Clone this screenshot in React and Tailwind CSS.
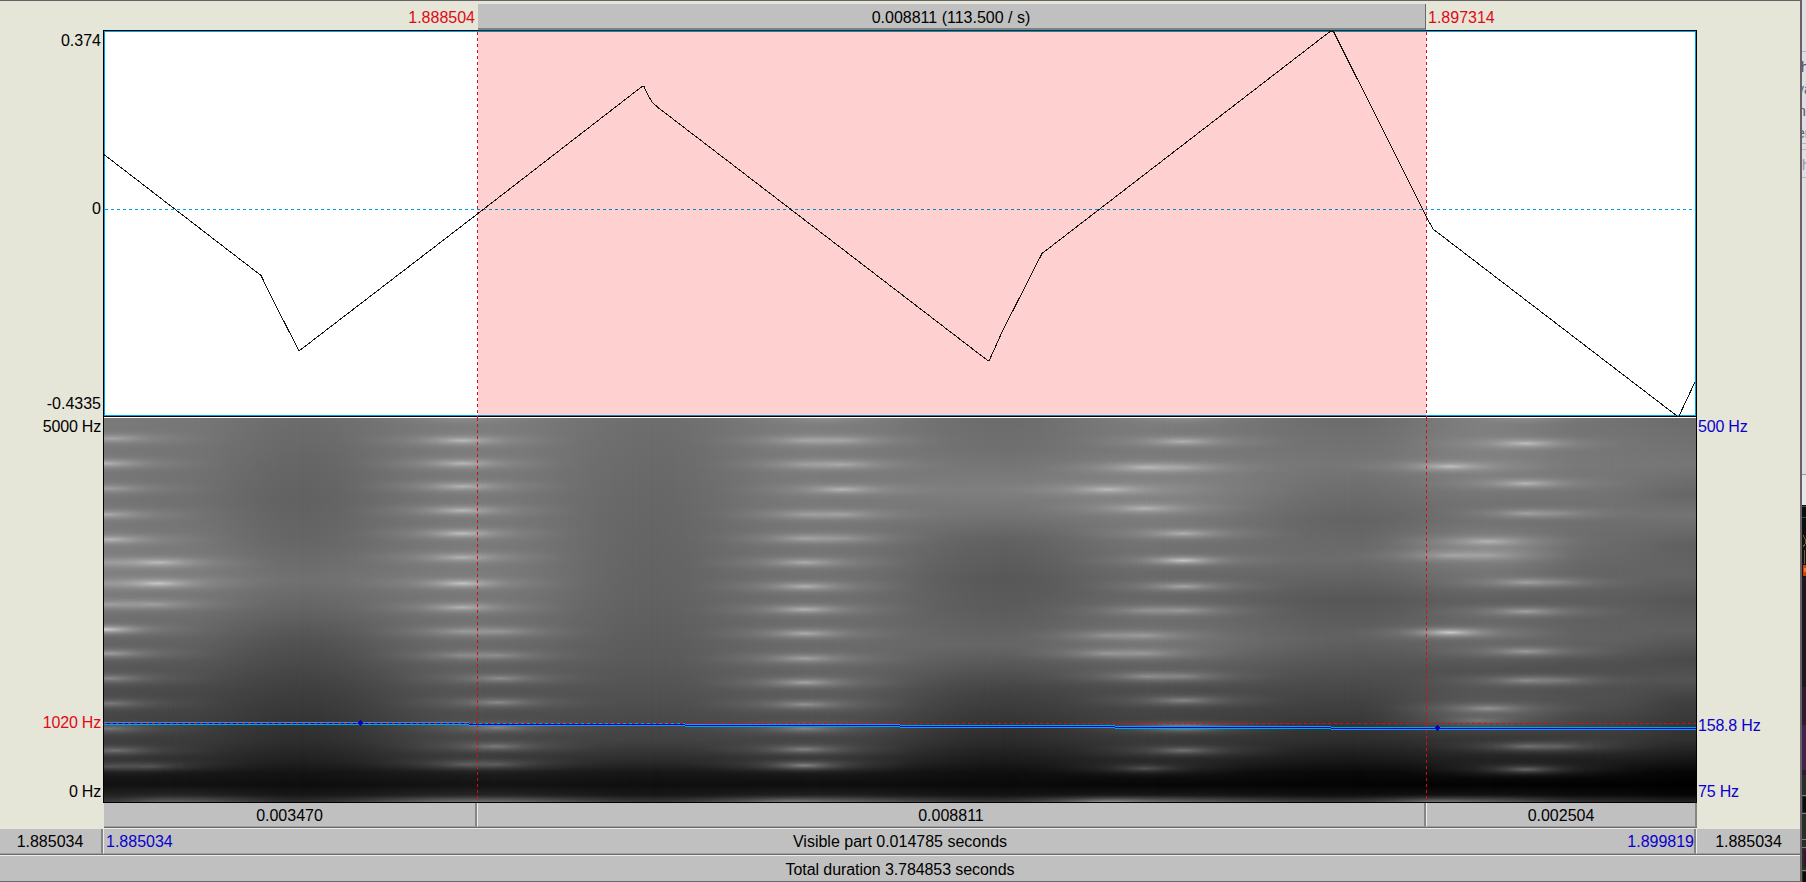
import React from "react";

const X0 = 104;
const Y0 = 418;
const W = 1592;
const H = 384;

/* Background energy of the spectrogram: grey levels per time column, keyed by y. */
const COLUMNS = [
  { x: 104, s: [[418, 0x7a], [500, 0x76], [580, 0x82], [640, 0x66], [690, 0x4e], [740, 0x40], [762, 0x30], [772, 0x1a], [785, 0x12], [795, 0x22], [802, 0x3c]] },
  { x: 170, s: [[418, 0x78], [500, 0x71], [580, 0x80], [640, 0x64], [690, 0x4a], [740, 0x3c], [762, 0x2c], [772, 0x18], [785, 0x11], [795, 0x26], [802, 0x60]] },
  { x: 300, s: [[418, 0x6d], [470, 0x65], [500, 0x62], [540, 0x66], [580, 0x71], [610, 0x64], [640, 0x53], [690, 0x3f], [740, 0x2e], [762, 0x20], [772, 0x15], [785, 0x0e], [795, 0x18], [802, 0x30]] },
  { x: 475, s: [[418, 0x7e], [500, 0x79], [580, 0x7c], [640, 0x6e], [690, 0x56], [740, 0x48], [762, 0x36], [772, 0x1e], [785, 0x13], [795, 0x26], [802, 0x70]] },
  { x: 650, s: [[418, 0x6e], [500, 0x67], [600, 0x62], [660, 0x5a], [700, 0x50], [740, 0x42], [762, 0x2a], [772, 0x18], [785, 0x0f], [795, 0x18], [802, 0x38]] },
  { x: 820, s: [[418, 0x7e], [500, 0x7a], [600, 0x70], [660, 0x6a], [700, 0x5a], [740, 0x46], [762, 0x30], [772, 0x1a], [785, 0x0e], [795, 0x20], [802, 0x60]] },
  { x: 1000, s: [[418, 0x6c], [450, 0x70], [490, 0x7f], [515, 0x74], [540, 0x62], [580, 0x58], [610, 0x5c], [645, 0x66], [670, 0x54], [690, 0x44], [740, 0x2c], [762, 0x1a], [772, 0x10], [785, 0x0a], [795, 0x14], [802, 0x38]] },
  { x: 1155, s: [[418, 0x7c], [450, 0x7a], [490, 0x86], [540, 0x74], [590, 0x66], [645, 0x74], [690, 0x4e], [740, 0x3a], [762, 0x26], [772, 0x12], [785, 0x07], [795, 0x18], [802, 0x60]] },
  { x: 1350, s: [[418, 0x6c], [465, 0x76], [520, 0x64], [560, 0x6c], [600, 0x57], [640, 0x61], [690, 0x48], [740, 0x2e], [762, 0x16], [772, 0x0a], [785, 0x04], [795, 0x10], [802, 0x38]] },
  { x: 1490, s: [[418, 0x7e], [465, 0x82], [515, 0x6e], [550, 0x86], [600, 0x60], [635, 0x6e], [670, 0x52], [715, 0x5a], [740, 0x34], [762, 0x20], [772, 0x0e], [785, 0x03], [795, 0x12], [802, 0x54]] },
  { x: 1600, s: [[418, 0x72], [465, 0x78], [515, 0x70], [550, 0x6a], [600, 0x5e], [640, 0x62], [665, 0x50], [700, 0x50], [740, 0x3a], [762, 0x1c], [772, 0x0c], [785, 0x02], [795, 0x0c], [802, 0x30]] },
  { x: 1696, s: [[418, 0x6c], [465, 0x76], [495, 0x66], [515, 0x74], [545, 0x60], [575, 0x64], [600, 0x56], [630, 0x60], [660, 0x4a], [680, 0x54], [700, 0x40], [740, 0x30], [762, 0x14], [772, 0x06], [785, 0x00], [795, 0x06], [802, 0x24]] },
];

/* Harmonics: [x, y, peak grey level]. */
const HARMONICS = [
  [112, 438, 0xa6], [106, 463, 0xb4], [110, 488, 0x9c], [106, 514, 0xaa], [110, 539, 0xb8],
  [158, 562, 0xbe], [104, 562, 0x94], [158, 583, 0xce], [104, 583, 0x90], [154, 604, 0x98], [108, 604, 0x98],
  [106, 629, 0xdc], [110, 653, 0x9c], [110, 678, 0x86], [110, 703, 0x78], [110, 728, 0x74],
  [115, 750, 0x70], [150, 766, 0x4a], [110, 766, 0x4a],
  [462, 440, 0xbc], [462, 463, 0xb8], [462, 486, 0xb5], [462, 510, 0xbc], [462, 533, 0xc4],
  [462, 557, 0xb2], [462, 583, 0xcb], [462, 607, 0xb4], [462, 631, 0x90], [500, 631, 0x8c],
  [462, 655, 0x80], [498, 655, 0x84], [500, 678, 0x8c], [498, 702, 0x88], [498, 727, 0x80],
  [496, 746, 0x78], [464, 764, 0x52], [497, 764, 0x50],
  [805, 440, 0x9c], [842, 440, 0x9c], [805, 464, 0x92], [842, 464, 0xa4], [842, 489, 0xb8],
  [805, 514, 0x94], [842, 514, 0x9a], [805, 538, 0x9c], [842, 538, 0x8c], [805, 562, 0xac],
  [805, 586, 0xb2], [805, 609, 0xb6], [805, 633, 0xae], [805, 658, 0xa0], [805, 682, 0xa6],
  [805, 704, 0x90], [805, 728, 0x80], [804, 749, 0x80], [804, 765, 0x86],
  [1183, 441, 0xb2], [1146, 467, 0xb4], [1183, 467, 0x98], [1108, 489, 0xbc], [1145, 508, 0xb6],
  [1183, 533, 0xb0], [1183, 560, 0xd4], [1183, 586, 0xa6], [1145, 610, 0x86], [1183, 610, 0x90],
  [1145, 635, 0x94], [1107, 635, 0x86], [1107, 653, 0x8e], [1145, 653, 0x8e],
  [1146, 676, 0x84], [1183, 676, 0x7a], [1183, 700, 0x86], [1183, 727, 0x96],
  [1183, 750, 0x70], [1145, 768, 0x50],
  [1526, 443, 0xc2], [1450, 466, 0xc2], [1526, 483, 0xb8], [1526, 513, 0x9c], [1560, 513, 0x80],
  [1488, 541, 0xb4], [1450, 555, 0x9c], [1488, 555, 0x9a], [1526, 582, 0x9a], [1560, 582, 0x78],
  [1526, 611, 0xa0], [1450, 632, 0xda], [1526, 651, 0x9a], [1526, 680, 0x84], [1562, 680, 0x6c],
  [1488, 708, 0x92], [1478, 720, 0x74], [1526, 746, 0x66], [1560, 746, 0x50], [1526, 769, 0x64],
  [462, 417, 0x90], [824, 417, 0x92], [1183, 417, 0x90], [1526, 417, 0x90],
  [1107, 803, 0xa4], [1440, 803, 0x80], [790, 803, 0x78],
];

const levelIn = (stops, y) => {
  if (y <= stops[0][0]) return stops[0][1];
  for (let i = 1; i < stops.length; i++) {
    if (y <= stops[i][0]) {
      const [ya, a] = stops[i - 1];
      const [yb, b] = stops[i];
      return a + ((b - a) * (y - ya)) / (yb - ya);
    }
  }
  return stops[stops.length - 1][1];
};

const levelAt = (x, y) => {
  for (let i = 1; i < COLUMNS.length; i++) {
    if (x <= COLUMNS[i].x) {
      const a = COLUMNS[i - 1];
      const b = COLUMNS[i];
      const t = (x - a.x) / (b.x - a.x);
      return levelIn(a.s, y) * (1 - t) + levelIn(b.s, y) * t;
    }
  }
  return 0;
};

const FALLOFF = [[0, 1], [0.08, 0.86], [0.18, 0.66], [0.3, 0.45], [0.45, 0.26], [0.62, 0.12], [0.8, 0.04], [1, 0]];
const SOFT = [[0, 1], [0.2, 0.85], [0.4, 0.56], [0.6, 0.28], [0.8, 0.08], [1, 0]];

const PITCH = [[103, 469, 723], [469, 685, 724], [685, 900, 725], [900, 1115, 726], [1115, 1331, 727], [1331, 1698, 728]];

function Spectrogram() {
  return (
    <svg className="block shrink-0" width={W} height={H} viewBox={`${X0} ${Y0} ${W} ${H}`}>
      <defs>
        {COLUMNS.map((c, i) => (
          <linearGradient key={i} id={`col${i}`} gradientUnits="userSpaceOnUse" x1="0" y1={Y0} x2="0" y2={Y0 + H}>
            {c.s.map(([y, g]) => (
              <stop key={y} offset={(y - Y0) / H} stopColor={`rgb(${g},${g},${g})`} />
            ))}
          </linearGradient>
        ))}
        <linearGradient id="ramp" x1="0" x2="1" y1="0" y2="0">
          {[0, 0.1, 0.2, 0.3, 0.4, 0.5, 0.6, 0.7, 0.8, 0.9, 1].map((t) => (
            <stop key={t} offset={t} stopColor="#fff" stopOpacity={t * t * (3 - 2 * t)} />
          ))}
        </linearGradient>
        <radialGradient id="core">
          {FALLOFF.map(([o, a]) => <stop key={o} offset={o} stopColor="#fff" stopOpacity={a} />)}
        </radialGradient>
        <radialGradient id="halo">
          {SOFT.map(([o, a]) => <stop key={o} offset={o} stopColor="#fff" stopOpacity={a} />)}
        </radialGradient>
        {COLUMNS.slice(1).map((c, i) => (
          <mask key={i} id={`mix${i}`} maskUnits="userSpaceOnUse" x={COLUMNS[i].x} y={Y0} width={c.x - COLUMNS[i].x} height={H}>
            <rect x={COLUMNS[i].x} y={Y0} width={c.x - COLUMNS[i].x} height={H} fill="url(#ramp)" />
          </mask>
        ))}
      </defs>
      {COLUMNS.slice(1).map((c, i) => {
        const x = COLUMNS[i].x;
        const w = c.x - x;
        return (
          <g key={i}>
            <rect x={x} y={Y0} width={w} height={H} fill={`url(#col${i})`} />
            <rect x={x} y={Y0} width={w} height={H} fill={`url(#col${i + 1})`} mask={`url(#mix${i})`} />
          </g>
        );
      })}
      {HARMONICS.map(([x, y, g], i) => {
        const base = levelAt(x, Math.min(y, 800));
        const a = Math.max(0, (g - base) / (255 - base));
        return (
          <g key={i}>
            <ellipse cx={x} cy={y + 0.5} rx="130" ry="11" fill="url(#halo)" opacity={Math.min(a * 0.34, 0.13)} />
            <ellipse cx={x} cy={y + 0.5} rx="60" ry="7.5" fill="url(#core)" opacity={a * 0.78} />
          </g>
        );
      })}
      <g shapeRendering="crispEdges">
        {PITCH.map(([a, b, y]) => (
          <g key={a}>
            <rect x={a} y={y - 1} width={b - a} height="3" fill="#00a2e8" />
            <rect x={a} y={y} width={b - a} height="1" fill="#0000c8" />
          </g>
        ))}
        <path d="M104 723.5H1696" stroke="#d80c18" strokeDasharray="3 3" />
        <path d="M360 720h1v1h1v1h1v2h-1v1h-1v1h-1v-1h-1v-1h-1v-2h1v-1h1zM1437 725h1v1h1v1h1v2h-1v1h-1v1h-1v-1h-1v-1h-1v-2h1v-1h1z" fill="#0000c8" />
        <path d="M477.5 418V802M1426.5 418V802" stroke="#d80c18" strokeDasharray="3 3" />
      </g>
    </svg>
  );
}

function Waveform() {
  return (
    <svg className="block shrink-0" width="1594" height="388" viewBox="103 30 1594 388" shapeRendering="crispEdges">
      <rect x="103" y="30" width="1594" height="388" fill="#fff" />
      <rect x="478" y="32" width="948" height="383" fill="#ffd0d0" />
      <path d="M104.5 417V31.5H1695.5V415.5H104" fill="none" stroke="#00a2e8" />
      <path d="M103.5 418V30.5H1696.5V418M103 416.5H1697" fill="none" stroke="#000" />
      <path d="M478 30.5H1426" stroke="#143030" />
      <path d="M478 31.5H1426M478 415.5H1426" stroke="#1886b8" />
      <path d="M105 209.5H478" stroke="#00a2e8" strokeDasharray="3 3" />
      <path d="M1426 209.5H1695" stroke="#00a2e8" strokeDasharray="3 3" strokeDashoffset="1" />
      <path d="M478 209.5H1426" stroke="#0088c0" strokeDasharray="3 3" strokeDashoffset="1" />
      <path d="M477.5 32V418M1426.5 32V418" stroke="#d80c18" strokeDasharray="3 3" />
      <path
        d="M104 154.5L261 275.5L273 300L299 351L478 213.5L642 86.5H644L648 95L652 102L658 107.5L791 209.5L987 360H989.5L1002 332L1042 253.5L1330 31.5H1333.5L1427 218L1433 229L1677 416H1679L1695 382"
        fill="none"
        stroke="#101818"
      />
    </svg>
  );
}

const panel = "flex items-center justify-center border-r-2 border-b border-r-[#858585] border-b-[#a0a0a0] bg-[#c0c0c0] pt-0.5";

function BackgroundWindow() {
  return (
    <div className="flex h-[882px] w-1 flex-col overflow-hidden bg-[#e0dee2] text-sm leading-[22px] text-[#5a4868]">
      <div className="h-[52px] border-b border-[#b8b6ba]" />
      <div className="flex h-[92px] flex-col overflow-hidden border-b border-[#b8b6ba] pt-1">
        <span className="-ml-px h-[22px]">h</span>
        <span className="-ml-[5px] h-[22px] text-[#4a6890]">vä</span>
        <span className="-ml-1 h-[22px]">n</span>
        <span className="-ml-[5px] h-[22px] text-[#4a6078]">er</span>
      </div>
      <div className="h-1.5 border-b border-[#b8b6ba]" />
      <div className="h-[28px] overflow-hidden border-b border-[#b8b6ba] pt-1 text-[#a08aa8]">h</div>
      <div className="h-[297px] border-b border-[#98969a]" />
      <div className="h-[30px] bg-[#e8e6ea]" />
      <svg className="shrink-0" width="4" height="377" viewBox="1802 505 4 377" shapeRendering="crispEdges">
        <rect x="1802" y="505" width="4" height="377" fill="#141016" />
        <rect x="1802" y="505" width="4" height="30" fill="#0b0e0b" />
        <path d="M1802 506.5h4M1802 517.5h4" stroke="#454845" />
        <path d="M1803 535l2 4v5l-2 3M1804.5 550v14" stroke="#6c6424" fill="none" />
        <rect x="1803" y="565" width="3" height="11" fill="#c84010" />
        <rect x="1804" y="568" width="2" height="4" fill="#f08010" />
        <rect x="1802" y="577" width="4" height="110" fill="#1c161f" />
        <rect x="1802" y="687" width="4" height="88" fill="#2c1a30" />
        <rect x="1802" y="725" width="4" height="45" fill="#42214a" />
        <rect x="1802" y="775" width="4" height="107" fill="#292c27" />
        <path d="M1802 795.5h4M1802 813.5h4M1802 839.5h4M1802 847.5h4M1802 870.5h4" stroke="#808080" />
        <rect x="1803" y="797" width="3" height="15" fill="#0a0a0a" />
        <rect x="1804" y="850" width="2" height="17" fill="#34113a" />
        <rect x="1803" y="872" width="3" height="10" fill="#0a0a0a" />
      </svg>
    </div>
  );
}

export default function App() {
  return (
    <div className="flex h-[882px] w-[1806px] overflow-hidden bg-[#e5e5d8] font-['Liberation_Sans',Arial,sans-serif] text-base leading-[18px] whitespace-nowrap text-black">
      <div className="flex w-[1802px] shrink-0 flex-col border-t border-r-2 border-[#666263]">
        <header className="flex h-[29px] text-[#e00a14]">
          <div className="w-[478px] pt-2 pr-[3px] text-right">1.888504</div>
          <div className="mt-[3px] flex w-[948px] items-start justify-center border-r border-b-2 border-r-[#696969] border-b-[#7d8480] bg-[#c0c0c0] pt-[5px] pr-px text-black">
            0.008811 (113.500 / s)
          </div>
          <div className="pt-2 pl-0.5">1.897314</div>
        </header>

        <main className="flex h-[799px]">
          <div className="flex w-[103px] flex-col items-end pt-0.5 pr-0.5">
            <span>0.374</span>
            <span className="mt-[150px]">0</span>
            <span className="mt-[177px]">-0.4335</span>
            <span className="mt-[5px] tracking-[-0.2px]">5000 Hz</span>
            <span className="mt-[278px] tracking-[-0.2px] text-[#e00a14]">1020 Hz</span>
            <span className="mt-[51px] tracking-[-0.2px]">0 Hz</span>
          </div>
          <div className="flex w-[1594px] flex-col">
            <Waveform />
            <div className="flex h-[385px] border-r border-b border-l border-black">
              <Spectrogram />
            </div>
            <div className="ml-px flex h-[25px] border-b border-[#696969]">
              <div className={`${panel} w-[373px]`}>0.003470</div>
              <div className={`${panel} w-[949px] border-l border-l-[#ececec]`}>0.008811</div>
              <div className={`${panel} w-[271px] border-l border-l-[#ececec]`}>0.002504</div>
            </div>
            <div className="h-px bg-[#ececec]" />
          </div>
          <div className="flex flex-col pt-[388px] pl-px tracking-[-0.2px] text-[#0a00cc]">
            <span>500 Hz</span>
            <span className="mt-[281px]">158.8 Hz</span>
            <span className="mt-[48px]">75 Hz</span>
          </div>
        </main>

        <div className="flex h-[26px] border-b border-[#696969]">
          <div className={`${panel} w-[103px] pr-px`}>1.885034</div>
          <div className={`${panel} w-[1593px] border-l border-l-[#ececec]`}>
            <span className="flex-1 pl-0.5 text-[#0a00cc]">1.885034</span>
            <span>Visible part 0.014785 seconds</span>
            <span className="flex-1 text-right text-[#0a00cc]">1.899819</span>
          </div>
          <div className="flex flex-1 items-center justify-center border-b border-l border-b-[#a0a0a0] border-l-[#ececec] bg-[#c0c0c0] pt-0.5">1.885034</div>
        </div>

        <footer className="flex h-[27px] items-center justify-center border-t border-b border-t-[#ececec] border-b-[#696969] bg-[#c0c0c0] pt-0.5 tracking-[-0.08px]">
          Total duration 3.784853 seconds
        </footer>
      </div>
      <BackgroundWindow />
    </div>
  );
}
